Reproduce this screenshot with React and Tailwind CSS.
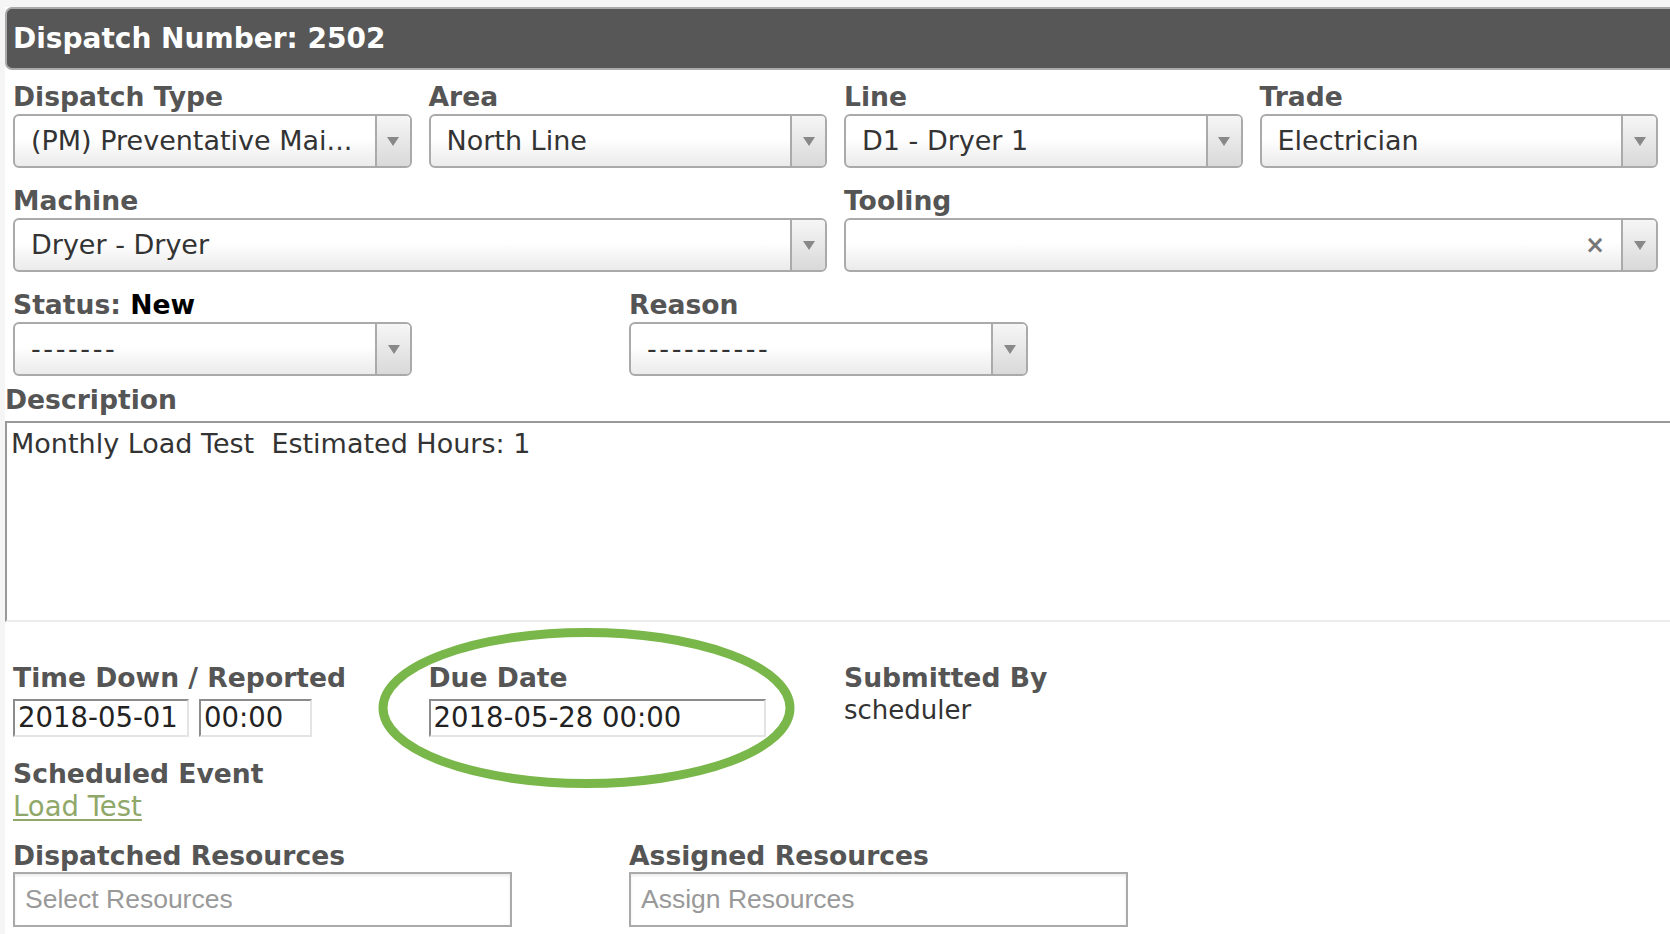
import { useState } from 'react'

const labelClass = 'block h-[28px] whitespace-nowrap text-[26.6px] font-bold leading-[28px] text-[#555]'

function Caret() {
  return (
    <svg width="12" height="9" viewBox="0 0 12 9">
      <path d="M0 0h12L6 9z" fill="#888" />
    </svg>
  )
}

function Select({ value, clearable = false, dashed = false }) {
  return (
    <div className="flex h-[54px] overflow-hidden rounded-[6px] border-2 border-[#aaa] bg-linear-to-b from-white from-45% to-[#ebebeb]">
      <div
        className={`flex min-w-0 flex-1 items-center whitespace-nowrap pl-[16px] text-[27px] text-[#333] ${
          dashed ? 'tracking-[2.6px]' : ''
        }`}
      >
        {value}
      </div>
      {clearable && (
        <span className="flex items-center pr-[16px] text-[24px] font-bold text-[#777]">×</span>
      )}
      <div className="flex w-[35px] items-center justify-center border-l-2 border-[#aaa] bg-linear-to-b from-[#f6f6f6] to-[#d9d9d9]">
        <Caret />
      </div>
    </div>
  )
}

function Field({ label, children, className = '' }) {
  return (
    <div className={className}>
      <label className={labelClass}>{label}</label>
      <div className="mt-[3px]">{children}</div>
    </div>
  )
}

function DateInput({ value, width }) {
  return (
    <input
      readOnly
      value={value}
      className={`h-[38px] ${width} border-2 border-t-[#8c8c8c] border-l-[#8c8c8c] border-r-[#e4e4e4] border-b-[#e4e4e4] bg-white pl-[3px] text-[27.5px] text-[#222] outline-none`}
    />
  )
}

function ResourceInput({ placeholder }) {
  return (
    <div className="flex h-[55px] w-[499px] items-center border-2 border-[#aaa] bg-white pl-[10px] shadow-[inset_0_2px_3px_rgba(0,0,0,0.08)]">
      <span className="font-['Liberation_Sans',Arial,sans-serif] text-[26.5px] text-[#999]">{placeholder}</span>
    </div>
  )
}

export default function App() {
  const [description] = useState('Monthly Load Test  Estimated Hours: 1')

  return (
    <div className="relative h-[934px] overflow-hidden bg-[#f5f5f5] pt-[7px] font-['DejaVu_Sans',Verdana,sans-serif]">
      <div className="ml-[5px] h-full bg-white">
        <div className="flex h-[63px] items-center rounded-l-[7px] border-2 border-r-0 border-[#aaa] bg-[#575757] pl-[6px]">
          <h1 className="text-[28px] font-bold text-white">Dispatch Number: 2502</h1>
        </div>

        <div className="pl-[8px] pr-[12px] pt-[13px]">
          <div className="grid grid-cols-4 gap-x-[17px] gap-y-[19px]">
            <Field label="Dispatch Type">
              <Select value="(PM) Preventative Mai..." />
            </Field>
            <Field label="Area">
              <Select value="North Line" />
            </Field>
            <Field label="Line">
              <Select value="D1 - Dryer 1" />
            </Field>
            <Field label="Trade">
              <Select value="Electrician" />
            </Field>
            <Field label="Machine" className="col-span-2">
              <Select value="Dryer - Dryer" />
            </Field>
            <Field label="Tooling" className="col-span-2">
              <Select value="" clearable />
            </Field>
          </div>

          <div className="mt-[19px] flex">
            <div className="w-[616px]">
              <label className={labelClass}>
                Status: <span className="text-black">New</span>
              </label>
              <div className="mt-[3px] w-[399px]">
                <Select value="-------" dashed />
              </div>
            </div>
            <div className="w-[399px]">
              <label className={labelClass}>Reason</label>
              <div className="mt-[3px]">
                <Select value="----------" dashed />
              </div>
            </div>
          </div>
        </div>

        <div className="mt-[10px]">
          <label className={labelClass}>Description</label>
          <textarea
            readOnly
            value={description}
            className="mt-[7px] block h-[201px] w-full resize-none border-2 border-r-0 border-t-[#999] border-l-[#999] border-b-[#ececec] bg-white px-[4px] pt-[5px] text-[27px] leading-[32px] text-[#333] outline-none"
          />
        </div>

        <div className="pl-[8px] pr-[12px]">
          <div className="mt-[42px] grid grid-cols-4 gap-x-[17px]">
            <div>
              <label className={labelClass}>Time Down / Reported</label>
              <div className="mt-[7px] flex gap-[10px]">
                <DateInput value="2018-05-01" width="w-[176px]" />
                <DateInput value="00:00" width="w-[113px]" />
              </div>
            </div>
            <div>
              <label className={labelClass}>Due Date</label>
              <div className="mt-[7px]">
                <DateInput value="2018-05-28 00:00" width="w-[337px]" />
              </div>
            </div>
            <div>
              <label className={labelClass}>Submitted By</label>
              <p className="mt-[4px] text-[26px] leading-[28px] text-[#333]">scheduler</p>
            </div>
          </div>

          <div className="mt-[23px]">
            <label className={labelClass}>Scheduled Event</label>
            <a href="#" className="mt-[4px] inline-block text-[27.5px] leading-[28px] text-[#8fa86a] underline underline-offset-[3px]">
              Load Test
            </a>
          </div>

          <div className="mt-[19px] flex">
            <div className="w-[616px]">
              <label className={labelClass}>Dispatched Resources</label>
              <div className="mt-[2px]">
                <ResourceInput placeholder="Select Resources" />
              </div>
            </div>
            <div>
              <label className={labelClass}>Assigned Resources</label>
              <div className="mt-[2px]">
                <ResourceInput placeholder="Assign Resources" />
              </div>
            </div>
          </div>
        </div>
      </div>

      {/* highlight ring around the due date */}
      <svg className="pointer-events-none absolute left-[378px] top-[628px]" width="417" height="160" viewBox="0 0 417 160">
        <ellipse cx="208.5" cy="80" rx="203.5" ry="75.5" fill="none" stroke="#7ab74a" strokeWidth="9" />
      </svg>
    </div>
  )
}
